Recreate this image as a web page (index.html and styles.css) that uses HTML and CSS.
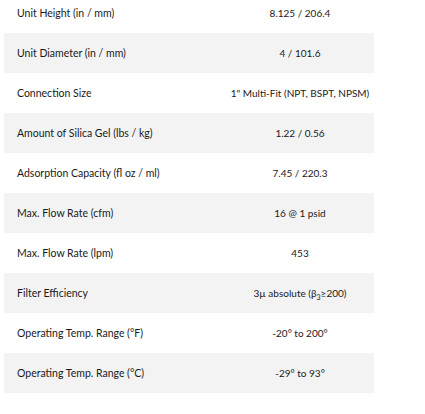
FILE: index.html
```html
<!DOCTYPE html>
<html>
<head>
<meta charset="utf-8">
<link rel="stylesheet" href="styles.css">
</head>
<body>
<div class="specs">
  <table class="spec-table">
    <tbody>
      <tr><td class="label">Unit Height (in / mm)</td><td class="value">8.125 / 206.4</td></tr>
      <tr><td class="label">Unit Diameter (in / mm)</td><td class="value">4 / 101.6</td></tr>
      <tr><td class="label">Connection Size</td><td class="value">1" Multi-Fit (NPT, BSPT, NPSM)</td></tr>
      <tr><td class="label">Amount of Silica Gel (lbs / kg)</td><td class="value">1.22 / 0.56</td></tr>
      <tr><td class="label">Adsorption Capacity (fl oz / ml)</td><td class="value">7.45 / 220.3</td></tr>
      <tr><td class="label">Max. Flow Rate (cfm)</td><td class="value">16 @ 1 psid</td></tr>
      <tr><td class="label">Max. Flow Rate (lpm)</td><td class="value">453</td></tr>
      <tr><td class="label">Filter Efficiency</td><td class="value">3µ absolute (β<sub>3</sub>≥200)</td></tr>
      <tr><td class="label">Operating Temp. Range (°F)</td><td class="value">-20° to 200°</td></tr>
      <tr><td class="label">Operating Temp. Range (°C)</td><td class="value">-29° to 93°</td></tr>
    </tbody>
  </table>
</div>
</body>
</html>
```
FILE: styles.css
```css
html, body {
  margin: 0;
  padding: 0;
  background: #fff;
}
.specs {
  padding: 0 4px;
  margin-top: -7px;
}
.spec-table {
  width: 370px;
  table-layout: fixed;
  border-collapse: collapse;
  font-family: Lato, "Liberation Sans", sans-serif;
  font-size: 10.5px;
  color: #1a1a1a;
}
.spec-table tr {
  height: 40px;
}
.spec-table tr:nth-child(even) {
  background: #f3f3f3;
}
.spec-table td {
  vertical-align: middle;
  white-space: nowrap;
}
.spec-table .label {
  width: 196px;
  padding: 0 13px;
  text-align: left;
}
.spec-table .value {
  width: 148px;
  padding: 0;
  text-align: center;
  font-size: 10px;
}
.value sub {
  font-size: 7px;
  line-height: 0;
}
```
